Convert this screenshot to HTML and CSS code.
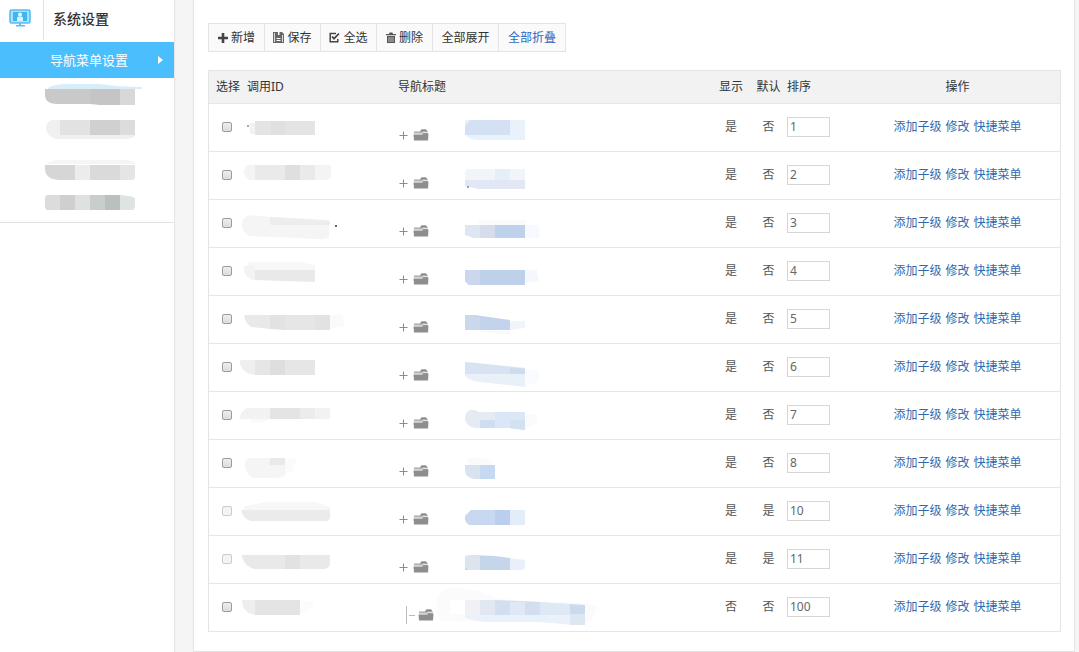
FILE: index.html
```html
<!DOCTYPE html>
<html lang="zh-CN">
<head>
<meta charset="utf-8">
<meta name="viewport" content="width=device-width, initial-scale=1">
<title>系统设置</title>
<link rel="stylesheet" href="styles.css">
</head>
<body>
<svg class="defs" aria-hidden="true">
  <symbol id="plus" viewBox="0 0 9 9"><path d="M4 0.5h1v8h-1zM0.5 4h8v1h-8z" fill="#8a8a8a"/></symbol>
  <symbol id="folder" viewBox="0 0 16 13"><path d="M1 3.500h6L8.500 1.500h4.500L14.500 3.500V6H1z" fill="#a3a3a3"/><path d="M7 3.500 8.500 1.500h4.500L14.500 3.500z" fill="#8c8c8c"/><path d="M1 4.800h8l1-1h4.500v1.200H10l-.8.800H1z" fill="#e2e2e2"/><path d="M.5 6.500h9l.8-1h5.200l-.5 7H1z" fill="#8e8e8e"/></symbol>
  <symbol id="branch" viewBox="0 0 9 18"><path d="M0 0h1v18H0zM3 9h6v1H3z" fill="#bbb"/></symbol>
</svg>
<div class="app">
  <aside class="sidebar">
    <header class="side-head">
      <span class="side-icon">
        <svg width="22" height="18" viewBox="0 0 22 18" aria-hidden="true"><rect x="1" y="1" width="20" height="13" rx="1.5" fill="#a8e2fb" stroke="#58bfef" stroke-width="1.6"/><rect x="4" y="3" width="14" height="9" fill="#3fb4f0"/><circle cx="11" cy="5.500" r="2" fill="#f4fcff"/><path d="M8 12V9q0-1.500 1.500-1.500h3Q14 7.500 14 9v3z" fill="#d8f3fe"/><path d="M10 14h2v2h4v1.500H7V16h3z" fill="#58bfef"/></svg>
      </span>
      <h1>系统设置</h1>
    </header>
    <nav>
      <ul class="menu">
        <li><a class="active" href="#">导航菜单设置</a></li>
        <li><svg class="smudge" width="98" height="36"><path d="M4 11Q5 6 28 6H56Q76 9 98 9V11H4z" fill="#d9edf9"/><path d="M1 11H46V26H14Q1 26 1 17z" fill="#c9c9c9"/><path d="M46 11h30v16H56l-10-1z" fill="#c5c5c5"/><path d="M76 11h15v16H76z" fill="#d8d8d8"/></svg></li>
        <li><svg class="smudge" width="98" height="36"><path d="M2 14Q3 6 9 6h82v16q-4 3-8 3H12Q3 22 2 14z" fill="#f0f0f0"/><path d="M16 6h30v15H16z" fill="#e2e2e2"/><path d="M46 6h30v15H46z" fill="#d0d0d0"/><path d="M76 6h15v15H76z" fill="#dcdcdc"/></svg></li>
        <li><svg class="smudge" width="98" height="36"><path d="M3 14q4-4 12-4h68q8 1 8 4z" fill="#f5f5f5"/><path d="M1 15h30v15H15Q1 29 1 19z" fill="#d6d6d6"/><path d="M31 15h15v15H31z" fill="#ececec"/><path d="M46 15h30v15H46z" fill="#dadada"/><path d="M76 15h15v12q0 3-4 3H76z" fill="#e5e5e5"/></svg></li>
        <li><svg class="smudge" width="98" height="36"><path d="M3 9h13v15H3l-2-2V11z" fill="#dcdcdc"/><path d="M16 9h15v15H16z" fill="#cfcfcf"/><path d="M31 9h15v15H31z" fill="#dee1e1"/><path d="M46 9h15v15H46z" fill="#c9cdcc"/><path d="M61 9h15v15H61z" fill="#bac0be"/><path d="M76 9q15 1 15 4v9l-2 2H76z" fill="#dfe3e3"/></svg></li>
      </ul>
    </nav>
  </aside>
  <main class="panel">
    <div class="toolbar">
      <button type="button"><svg width="10" height="10" viewBox="0 0 10 10" aria-hidden="true"><path d="M3.700 0h2.600v3.700H10v2.600H6.300V10H3.700V6.300H0V3.700h3.700z" fill="#444"/></svg>新增</button>
      <button type="button"><svg width="11" height="11" viewBox="0 0 11 11" aria-hidden="true"><path d="M0 0h9l2 2v9H0z" fill="#666"/><path d="M1 1h1v9H1zM9 3h1v7H9z" fill="#ddd"/><path d="M5 0h1.500v3H5zM3.500 6h4v1h-4zM3.500 8h4v1h-4z" fill="#fff"/></svg>保存</button>
      <button type="button"><svg width="11" height="11" viewBox="0 0 11 11" aria-hidden="true"><path d="M7 1.500H1.200v8.300h7.600V7" fill="none" stroke="#444" stroke-width="1.500"/><path d="M3 4.500l2 2.200L10 1.500" fill="none" stroke="#444" stroke-width="1.800"/></svg>全选</button>
      <button type="button"><svg width="10" height="11" viewBox="0 0 10 11" aria-hidden="true"><path d="M0 2h3l.6-1.500h2.800L7 2h3v1.200H0zM1 4h8v7H1z" fill="#555"/><path d="M3 5v5M5 5v5M7 5v5" stroke="#ddd" stroke-width=".8"/></svg>删除</button>
      <button type="button" class="wide">全部展开</button>
      <button type="button" class="wide current">全部折叠</button>
    </div>
    <table class="grid">
      <colgroup><col class="c-pick"><col class="c-id"><col><col class="c-show"><col class="c-def"><col class="c-sort"><col class="c-ops"></colgroup>
      <thead>
        <tr><th class="mid">选择</th><th>调用ID</th><th>导航标题</th><th class="mid">显示</th><th class="mid">默认</th><th>排序</th><th class="mid">操作</th></tr>
      </thead>
      <tbody>
        <tr>
          <td class="mid"><input type="checkbox" aria-label="选择 1"></td>
          <td><svg class="smudge" width="100" height="47"><path d="M2 19h6v11H3z" fill="#f2f2f2"/><path d="M8 17h60v14H8z" fill="#e4e4e4"/><path d="M24 17h14v14H24z" fill="#e0e0e0"/><path d="M0 21h2v2H0z" fill="#aaa"/></svg></td>
          <td><div class="title"><svg class="plus"><use href="#plus"/></svg><svg class="folder"><use href="#folder"/></svg><svg class="smudge" width="120" height="47"><path d="M1 16h60v20H12Q1 35 1 26z" fill="#e9f1fb"/><path d="M6 16h40v15H1V22z" fill="#d4e1f4"/></svg></div></td>
          <td class="mid">是</td><td class="mid">否</td>
          <td><input class="sort" type="text" value="1" aria-label="排序"></td>
          <td class="mid"><div class="ops"><a href="#">添加子级</a><a href="#">修改</a><a href="#">快捷菜单</a></div></td>
        </tr>
        <tr>
          <td class="mid"><input type="checkbox" aria-label="选择 2"></td>
          <td><svg class="smudge" width="100" height="47"><path d="M0 13h84v12l-4 3H2Q-3 25-3 19z" fill="#f4f4f4"/><path d="M24 13h44v15H8V13z" fill="#eaeaea"/><path d="M38 13h15v15H38z" fill="#dfdfdf"/></svg></td>
          <td><div class="title"><svg class="plus"><use href="#plus"/></svg><svg class="folder"><use href="#folder"/></svg><svg class="smudge" width="120" height="47"><path d="M3 17h58v11H1V20z" fill="#f1f4f8"/><path d="M31 17h15v11H31z" fill="#e6eef7"/><path d="M1 28h60v9H14L1 34z" fill="#e1e7f4"/><path d="M3 34h2v2H3z" fill="#8fa0bd"/></svg></div></td>
          <td class="mid">是</td><td class="mid">否</td>
          <td><input class="sort" type="text" value="2" aria-label="排序"></td>
          <td class="mid"><div class="ops"><a href="#">添加子级</a><a href="#">修改</a><a href="#">快捷菜单</a></div></td>
        </tr>
        <tr>
          <td class="mid"><input type="checkbox" aria-label="选择 3"></td>
          <td><svg class="smudge" width="100" height="47"><path d="M-5 22Q-2 13 10 16L82 20v17q-3 3-10 2L2 36Q-7 30-5 22z" fill="#f5f5f5"/><path d="M23 17l60 4v4H23z" fill="#ededed"/><path d="M88 25h2v2h-2z" fill="#666"/></svg></td>
          <td><div class="title"><svg class="plus"><use href="#plus"/></svg><svg class="folder"><use href="#folder"/></svg><svg class="smudge" width="120" height="47"><path d="M15 20h46v5H15z" fill="#fafafa"/><path d="M1 25h30v13H10L1 35z" fill="#dee5f3"/><path d="M16 25h15v13H16z" fill="#d7dced"/><path d="M31 25h30v13H31z" fill="#bfd2eb"/><path d="M61 25h14v13H61z" fill="#f6f9fe"/></svg></div></td>
          <td class="mid">是</td><td class="mid">否</td>
          <td><input class="sort" type="text" value="3" aria-label="排序"></td>
          <td class="mid"><div class="ops"><a href="#">添加子级</a><a href="#">修改</a><a href="#">快捷菜单</a></div></td>
        </tr>
        <tr>
          <td class="mid"><input type="checkbox" aria-label="选择 4"></td>
          <td><svg class="smudge" width="100" height="47"><path d="M2 14h50l16 3v6H-2z" fill="#f7f7f7"/><path d="M-3 18H8v15Q-2 30-3 22z" fill="#f3f3f3"/><path d="M8 22h60v12L8 32z" fill="#e9e9e9"/></svg></td>
          <td><div class="title"><svg class="plus"><use href="#plus"/></svg><svg class="folder"><use href="#folder"/></svg><svg class="smudge" width="120" height="47"><path d="M1 22h60v15H5L1 33z" fill="#bdd1ea"/><path d="M1 22h15v15H5L1 33z" fill="#cad7ec"/><path d="M61 22h12l2 11-14 2z" fill="#f4f8fd"/></svg></div></td>
          <td class="mid">是</td><td class="mid">否</td>
          <td><input class="sort" type="text" value="4" aria-label="排序"></td>
          <td class="mid"><div class="ops"><a href="#">添加子级</a><a href="#">修改</a><a href="#">快捷菜单</a></div></td>
        </tr>
        <tr>
          <td class="mid"><input type="checkbox" aria-label="选择 5"></td>
          <td><svg class="smudge" width="100" height="47"><path d="M-3 19h26v14L4 31Q-2 27-3 19z" fill="#e9e9e9"/><path d="M23 19h60v15H38l-15-1z" fill="#e2e2e2"/><path d="M38 19h15v15H38zM53 19h15v15H53z" fill="#e6e6e6"/><path d="M83 19h12l3 11-15 3z" fill="#fafafa"/></svg></td>
          <td><div class="title"><svg class="plus"><use href="#plus"/></svg><svg class="folder"><use href="#folder"/></svg><svg class="smudge" width="120" height="47"><path d="M1 19h10l35 5v10H1z" fill="#c4d3ec"/><path d="M1 19h10l5 2v13H1z" fill="#cbd7ea"/><path d="M46 25h15v7l-15 2z" fill="#f0f5fc"/><path d="M10 35h36v4z" fill="#faf9f9"/></svg></div></td>
          <td class="mid">是</td><td class="mid">否</td>
          <td><input class="sort" type="text" value="5" aria-label="排序"></td>
          <td class="mid"><div class="ops"><a href="#">添加子级</a><a href="#">修改</a><a href="#">快捷菜单</a></div></td>
        </tr>
        <tr>
          <td class="mid"><input type="checkbox" aria-label="选择 6"></td>
          <td><svg class="smudge" width="100" height="47"><path d="M-7 16H8v15Q-5 29-7 20z" fill="#efefef"/><path d="M8 16h60v15H8z" fill="#e6e6e6"/><path d="M23 16h15v15H23z" fill="#dedede"/></svg></td>
          <td><div class="title"><svg class="plus"><use href="#plus"/></svg><svg class="folder"><use href="#folder"/></svg><svg class="smudge" width="120" height="47"><path d="M1 18l12 1 48 5v6H1z" fill="#d7e3f2"/><path d="M1 30h60v13L16 38Q1 36 1 30z" fill="#eaf0f7"/><path d="M46 24l15 1v5H46z" fill="#cddced"/><path d="M61 26h14v12l-14 4z" fill="#fafbfe"/></svg></div></td>
          <td class="mid">是</td><td class="mid">否</td>
          <td><input class="sort" type="text" value="6" aria-label="排序"></td>
          <td class="mid"><div class="ops"><a href="#">添加子级</a><a href="#">修改</a><a href="#">快捷菜单</a></div></td>
        </tr>
        <tr>
          <td class="mid"><input type="checkbox" aria-label="选择 7"></td>
          <td><svg class="smudge" width="100" height="47"><path d="M0 16h83v11H-8Q-5 18 0 16z" fill="#f2f2f2"/><path d="M23 16h45v11H23z" fill="#e4e4e4"/><path d="M53 16h15v11H53z" fill="#ececec"/><path d="M4 27h18l-8 4H4z" fill="#fafafa"/></svg></td>
          <td><div class="title"><svg class="plus"><use href="#plus"/></svg><svg class="folder"><use href="#folder"/></svg><svg class="smudge" width="120" height="47"><path d="M1 24Q4 14 15 20h46v18l-16-2H12Q1 35 1 24z" fill="#e5eaf3"/><path d="M16 28h15v8H16z" fill="#cfddf3"/><path d="M31 20h30v18l-16-2H31z" fill="#dbe7f6"/><path d="M46 28h15v10l-15-2z" fill="#d3e2f1"/><path d="M61 22h12v9l-12 6z" fill="#fafbfd"/></svg></div></td>
          <td class="mid">是</td><td class="mid">否</td>
          <td><input class="sort" type="text" value="7" aria-label="排序"></td>
          <td class="mid"><div class="ops"><a href="#">添加子级</a><a href="#">修改</a><a href="#">快捷菜单</a></div></td>
        </tr>
        <tr>
          <td class="mid"><input type="checkbox" aria-label="选择 8"></td>
          <td><svg class="smudge" width="100" height="47"><path d="M1 18h37v18l-8 2H6Q-4 32-2 22z" fill="#f5f5f5"/><path d="M23 18h15v7H23z" fill="#e9e9e9"/><path d="M38 18h12l-4 14-8 2z" fill="#fbfbfb"/></svg></td>
          <td><div class="title"><svg class="plus"><use href="#plus"/></svg><svg class="folder"><use href="#folder"/></svg><svg class="smudge" width="120" height="47"><path d="M4 19q12-4 24 2v4H4z" fill="#fafafa"/><path d="M1 25h15v14H10Q1 37 1 31z" fill="#d9e3ef"/><path d="M16 25h15v14H16z" fill="#c6d9f0"/></svg></div></td>
          <td class="mid">是</td><td class="mid">否</td>
          <td><input class="sort" type="text" value="8" aria-label="排序"></td>
          <td class="mid"><div class="ops"><a href="#">添加子级</a><a href="#">修改</a><a href="#">快捷菜单</a></div></td>
        </tr>
        <tr>
          <td class="mid"><input type="checkbox" disabled aria-label="选择 10"></td>
          <td><svg class="smudge" width="100" height="47"><path d="M-3 18q10-2 26-4h45l15 5v3H-3z" fill="#f7f7f7"/><path d="M-6 22h89v8l-2 3H4Q-4 31-6 22z" fill="#ebebeb"/></svg></td>
          <td><div class="title"><svg class="plus"><use href="#plus"/></svg><svg class="folder"><use href="#folder"/></svg><svg class="smudge" width="120" height="47"><path d="M7 22h39v15H5Q0 34 1 28z" fill="#c7d8f0"/><path d="M31 22h15v15H31z" fill="#bacfed"/><path d="M46 22h15v15H46z" fill="#e3ecf9"/></svg></div></td>
          <td class="mid">是</td><td class="mid">是</td>
          <td><input class="sort" type="text" value="10" aria-label="排序"></td>
          <td class="mid"><div class="ops"><a href="#">添加子级</a><a href="#">修改</a><a href="#">快捷菜单</a></div></td>
        </tr>
        <tr>
          <td class="mid"><input type="checkbox" disabled aria-label="选择 11"></td>
          <td><svg class="smudge" width="100" height="47"><path d="M-5 19h88v8q0 6-8 6H8Q-2 31-5 21z" fill="#e9e9e9"/><path d="M38 19h15v14H38z" fill="#e2e2e2"/></svg></td>
          <td><div class="title"><svg class="plus"><use href="#plus"/></svg><svg class="folder"><use href="#folder"/></svg><svg class="smudge" width="120" height="47"><path d="M1 20l8-1 22 1 15 2v12H1z" fill="#c5d6eb"/><path d="M1 20l8-1 7 1v14H4l-3-3z" fill="#dce4f0"/><path d="M46 22l15 2v8l-3 2H46z" fill="#e9f0fb"/></svg></div></td>
          <td class="mid">是</td><td class="mid">是</td>
          <td><input class="sort" type="text" value="11" aria-label="排序"></td>
          <td class="mid"><div class="ops"><a href="#">添加子级</a><a href="#">修改</a><a href="#">快捷菜单</a></div></td>
        </tr>
        <tr>
          <td class="mid"><input type="checkbox" aria-label="选择 100"></td>
          <td><svg class="smudge" width="100" height="47"><path d="M-5 16H8v15Q-5 29-5 16z" fill="#eeeeee"/><path d="M8 16h45v15H8z" fill="#e4e4e4"/><path d="M53 17h15l-4 8-11 5z" fill="#fcfcfc"/></svg></td>
          <td><div class="title child"><svg class="branch"><use href="#branch"/></svg><svg class="folder"><use href="#folder"/></svg><svg class="smudge" width="140" height="47"><path d="M-27 15Q-24 3-8 4L12 6l24 9 85 4 12 4-5 13-7 3-140-2Q-30 37-27 15z" fill="#fbfbfb"/><path d="M-14 16H1v14h-15z" fill="#fff"/><path d="M1 16h32l88 5v15l-12 5-32-3H20L1 34z" fill="#e9f1fb"/><path d="M1 16h15v15H1z" fill="#eff1f4"/><path d="M16 16h15v15H16z" fill="#e2e8f2"/><path d="M31 16l45 2v13H31z" fill="#d3dff0"/><path d="M46 18h15v13H46z" fill="#dfe8f5"/><path d="M76 18l30 2v11H76z" fill="#dfe9f6"/><path d="M106 20l15 1v9h-15z" fill="#cbdaec"/><path d="M106 30h15v11h-15z" fill="#dce7f2"/></svg></div></td>
          <td class="mid">否</td><td class="mid">否</td>
          <td><input class="sort" type="text" value="100" aria-label="排序"></td>
          <td class="mid"><div class="ops"><a href="#">添加子级</a><a href="#">修改</a><a href="#">快捷菜单</a></div></td>
        </tr>
      </tbody>
    </table>
  </main>
</div>
</body>
</html>
```
FILE: styles.css
```css
* { box-sizing: border-box; }
body {
  margin: 0;
  background: #f5f5f5;
  color: #555;
  font: 12px/18px "Noto Sans", "Noto Sans CJK SC", sans-serif;
}
a { color: #3468ae; text-decoration: none; }
.defs { position: absolute; width: 0; height: 0; }
.smudge { display: block; overflow: visible; }

.app {
  display: flex;
  gap: 18px;
  min-height: 100vh;
  padding-right: 4px;
}
.sidebar {
  flex: 0 0 175px;
  background: #fff;
  border-right: 1px solid #e4e4e4;
}
.side-head { display: flex; height: 42px; }
.side-icon {
  display: flex;
  align-items: center;
  justify-content: center;
  width: 44px;
  height: 40px;
  padding-right: 3px;
  padding-bottom: 4px;
  border-right: 1px solid #e2e2e2;
}
.side-head h1 {
  margin: 0;
  padding-left: 9px;
  font-size: 14px;
  font-weight: 500;
  line-height: 38px;
  color: #333;
}
.menu {
  margin: 0;
  padding: 0;
  list-style: none;
  border-bottom: 1px solid #e2e2e2;
}
.menu li { height: 36px; padding-left: 44px; }
.menu li:first-child { padding: 0; }
.menu .active {
  display: flex;
  align-items: center;
  justify-content: space-between;
  height: 36px;
  padding: 0 11px 0 50px;
  background: #4bbffd;
  color: #fff;
  font-size: 13px;
}
.menu .active::after {
  content: "";
  border: 4px solid transparent;
  border-left: 5px solid #fff;
  border-right: 0;
}

.panel {
  flex: 1;
  min-width: 0;
  padding: 23px 13px 19px 14px;
  background: #fff;
  border: 1px solid #e4e4e4;
  border-top: 0;
}
.toolbar {
  display: inline-flex;
  height: 29px;
  margin-bottom: 18px;
  border: 1px solid #e4e4e4;
  background: #fafafa;
  vertical-align: top;
}
.toolbar button {
  display: flex;
  align-items: center;
  justify-content: center;
  gap: 3px;
  min-width: 56px;
  padding: 0 8px;
  border: 0;
  border-right: 1px solid #e4e4e4;
  background: none;
  color: #333;
  font: inherit;
}
.toolbar .wide { min-width: 66px; }
.toolbar button:last-child { border-right: 0; }
.toolbar .current { color: #2a68c0; }

.grid {
  width: 100%;
  table-layout: fixed;
  border-collapse: separate;
  border-spacing: 0;
  border: 1px solid #e4e4e4;
  border-bottom: 0;
}
.c-pick { width: 38px; }
.c-id { width: 151px; }
.c-show { width: 38px; }
.c-def { width: 37px; }
.c-sort { width: 68px; }
.c-ops { width: 205px; }
.grid th, .grid td {
  padding: 0;
  border-bottom: 1px solid #e6e6e6;
  text-align: left;
  vertical-align: middle;
  white-space: nowrap;
}
.grid th {
  height: 33px;
  background: #f2f2f2;
  color: #333;
  font-weight: 400;
}
.grid td { height: 48px; }
.grid .mid { text-align: center; }
.grid td.mid { padding-bottom: 2px; }

input[type="checkbox"] {
  appearance: none;
  display: block;
  width: 10px;
  height: 10px;
  margin: 0 15px 0 13px;
  border: 1px solid #9c9c9c;
  border-radius: 2px;
  background: linear-gradient(#eee, #ddd);
}
input[type="checkbox"]:disabled { border-color: #ccc; background: #f4f4f4; }
input[type="checkbox"]:checked { background: #4bbffd; }

.title { display: flex; align-items: center; padding-left: 1px; }
.plus { width: 9px; height: 9px; margin: 15px 5px 0 0; }
.folder { width: 16px; height: 13px; margin: 14px 35px 0 0; }
.branch { width: 9px; height: 18px; margin: 14px 3px 0 0; }
.child { padding-left: 8px; }
.child .folder { margin-right: 30px; }

.sort {
  display: block;
  width: 43px;
  height: 20px;
  margin: 0 0 2px;
  padding: 0 2px;
  border: 1px solid #d6d6d6;
  background: #fff;
  color: #666;
  font: inherit;
}
.ops { display: flex; justify-content: center; gap: 4px; }
```
